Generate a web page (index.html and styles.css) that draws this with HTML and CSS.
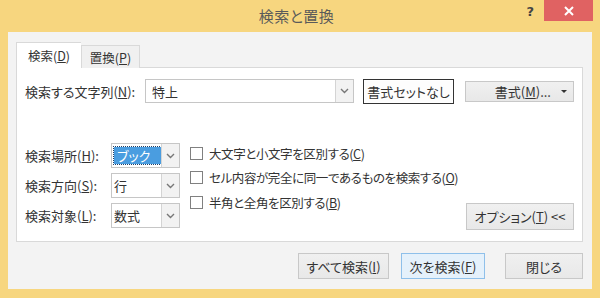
FILE: index.html
```html
<!DOCTYPE html>
<html lang="ja">
<head>
<meta charset="utf-8">
<title>検索と置換</title>
<link rel="stylesheet" href="styles.css">
</head>
<body>
<div class="window">
  <div class="titlebar">
    <div class="spacer"></div>
    <div class="title">検索と置換</div>
    <div class="controls">
      <span class="help">?</span>
      <span class="close"><svg width="12" height="12" viewBox="0 0 12 12"><path d="M2 2L10 10M10 2L2 10" stroke="#fff" stroke-width="2"/></svg></span>
    </div>
  </div>
  <div class="client">
    <div class="tabs">
      <div class="tab active">検索(<u>D</u>)</div>
      <div class="tab">置換(<u>P</u>)</div>
    </div>
    <div class="panel">
      <div class="row-find">
        <label class="find-label">検索する文字列(<u>N</u>):</label>
        <div class="combo find-combo">
          <span class="combo-text">特上</span>
          <span class="combo-arrow"><svg width="9" height="6" viewBox="0 0 9 6"><path d="M1 1L4.5 4.5L8 1" fill="none" stroke="#777" stroke-width="1.4"/></svg></span>
        </div>
        <button class="btn btn-noformat">書式セットなし</button>
        <button class="btn btn-format"><span>書式(<u>M</u>)...</span><span class="tri"></span></button>
      </div>
      <div class="lower">
        <div class="selects">
          <label class="sel-label">検索場所(<u>H</u>):</label>
          <div class="combo small">
            <span class="combo-text"><span class="hl">ブック</span></span>
            <span class="combo-arrow"><svg width="9" height="6" viewBox="0 0 9 6"><path d="M1 1L4.5 4.5L8 1" fill="none" stroke="#777" stroke-width="1.4"/></svg></span>
          </div>
          <label class="sel-label">検索方向(<u>S</u>):</label>
          <div class="combo small">
            <span class="combo-text">行</span>
            <span class="combo-arrow"><svg width="9" height="6" viewBox="0 0 9 6"><path d="M1 1L4.5 4.5L8 1" fill="none" stroke="#777" stroke-width="1.4"/></svg></span>
          </div>
          <label class="sel-label">検索対象(<u>L</u>):</label>
          <div class="combo small">
            <span class="combo-text">数式</span>
            <span class="combo-arrow"><svg width="9" height="6" viewBox="0 0 9 6"><path d="M1 1L4.5 4.5L8 1" fill="none" stroke="#777" stroke-width="1.4"/></svg></span>
          </div>
        </div>
        <div class="checks">
          <div class="check"><span class="box"></span><span class="check-text">大文字と小文字を区別する(<u>C</u>)</span></div>
          <div class="check"><span class="box"></span><span class="check-text">セル内容が完全に同一であるものを検索する(<u>O</u>)</span></div>
          <div class="check"><span class="box"></span><span class="check-text">半角と全角を区別する(<u>B</u>)</span></div>
        </div>
        <button class="btn btn-options">オプション(<u>T</u>) &lt;&lt;</button>
      </div>
    </div>
    <div class="actions">
      <button class="btn btn-all">すべて検索(<u>I</u>)</button>
      <button class="btn btn-next">次を検索(<u>F</u>)</button>
      <button class="btn btn-close">閉じる</button>
    </div>
  </div>
</div>
</body>
</html>
```
FILE: styles.css
```css
* { box-sizing: border-box; }
html, body { margin: 0; padding: 0; }
body {
  width: 600px;
  height: 298px;
  overflow: hidden;
  background: #f7d67f;
  font-family: "Noto Sans CJK JP", "Noto Sans", sans-serif;
  font-feature-settings: "palt";
  font-size: 13px;
  color: #333;
}
.window {
  width: 600px;
  height: 298px;
  padding: 0 8px 9px 8px;
  display: flex;
  flex-direction: column;
}
.titlebar {
  height: 32px;
  margin: 0 -8px;
  padding-right: 7px;
  display: grid;
  grid-template-columns: 1fr auto 1fr;
  align-items: start;
}
.title {
  font-size: 15px;
  color: #5a5a5a;
  line-height: 32px;
  letter-spacing: 0.5px;
}
.controls {
  justify-self: end;
  display: flex;
  align-items: flex-start;
}
.help {
  font-family: "DejaVu Sans", sans-serif;
  font-weight: bold;
  font-size: 13px;
  color: #444;
  margin-top: 4px;
  margin-right: 10px;
}
.close {
  width: 49px;
  height: 21px;
  background: #e06262;
  display: flex;
  align-items: center;
  justify-content: center;
}
.client {
  flex: 1;
  background: #f3f3f3;
  padding: 10px 9px 10px 8px;
  display: flex;
  flex-direction: column;
}
.tabs {
  display: flex;
  align-items: flex-end;
  height: 26px;
  position: relative;
  z-index: 1;
  margin-bottom: -1px;
}
.tab {
  height: 23px;
  width: 59px;
  border: 1px solid #d9d9d9;
  border-bottom: none;
  background: #f0f0f0;
  display: flex;
  align-items: center;
  justify-content: center;
  font-size: 12.5px;
}
.tab.active {
  height: 26px;
  width: 65px;
  background: #fff;
  border-right: none;
}
.panel {
  height: 175px;
  background: #fff;
  border: 1px solid #d9d9d9;
  display: flex;
  flex-direction: column;
}
.row-find {
  display: flex;
  align-items: center;
  padding: 10px 0 0 8px;
  height: 36px;
}
.find-label { width: 120px; }
.combo {
  display: flex;
  border: 1px solid #c6c6c6;
  background: #fff;
  height: 24px;
}
.combo-text {
  flex: 1;
  display: flex;
  align-items: center;
  padding-left: 6px;
}
.combo-arrow {
  width: 18px;
  border-left: 1px solid #d4d4d4;
  background: #f2f2f2;
  display: flex;
  align-items: center;
  justify-content: center;
}
.find-combo { width: 209px; }
.btn {
  font-family: inherit;
  font-feature-settings: "palt";
  font-size: 13px;
  color: #333;
  background: linear-gradient(#f0f0f0, #e8e8e8);
  border: 1px solid #c8c8c8;
  padding: 0;
  margin: 0;
  white-space: nowrap;
}
.btn-noformat {
  width: 91px;
  height: 25px;
  margin-left: 9px;
  background: #fdfdfd;
  border: 1px solid #333;
  box-shadow: inset 0 0 0 1px #fff;
}
.btn-format {
  width: 109px;
  height: 21px;
  margin-left: 11px;
  display: flex;
  align-items: center;
  justify-content: flex-end;
  padding-right: 6px;
  gap: 10px;
}
.tri {
  width: 0;
  height: 0;
  border-left: 3px solid transparent;
  border-right: 3px solid transparent;
  border-top: 3px solid #333;
}
.lower {
  flex: 1;
  display: flex;
  padding: 38px 8px 10px 8px;
}
.selects {
  display: grid;
  grid-template-columns: 86px 69px;
  grid-auto-rows: 25px;
  row-gap: 5px;
  align-items: center;
  margin-top: 1px;
}
.combo.small { width: 69px; height: 25px; }
.combo.small .combo-text { padding-left: 2px; }
.hl {
  background: #4a9de0;
  color: #fff;
  outline: 1px dotted #1f3f66;
  width: 47px;
  height: 17px;
  display: flex;
  align-items: center;
  padding-left: 3px;
}
.checks {
  margin-left: 10px;
  margin-top: -1px;
  display: flex;
  flex-direction: column;
  flex: 1;
  min-width: 0;
}
.check {
  height: 24.5px;
  display: flex;
  align-items: center;
  gap: 6px;
  white-space: nowrap;
  font-size: 12.5px;
  letter-spacing: -0.4px;
}
.box {
  flex: none;
  width: 13px;
  height: 13px;
  border: 1px solid #808080;
  background: #fff;
}
.btn-options {
  flex: none;
  align-self: flex-end;
  width: 108px;
  height: 27px;
  margin-bottom: 1px;
}
.actions {
  display: flex;
  justify-content: flex-end;
  margin-top: 11px;
  height: 26px;
}
.actions .btn { height: 26px; }
.btn-all { width: 91px; }
.btn-next {
  width: 84px;
  margin-left: 12px;
  background: #e5f1fb;
  border-color: #8fc0ea;
}
.btn-close { width: 78px; margin-left: 20px; }
```
